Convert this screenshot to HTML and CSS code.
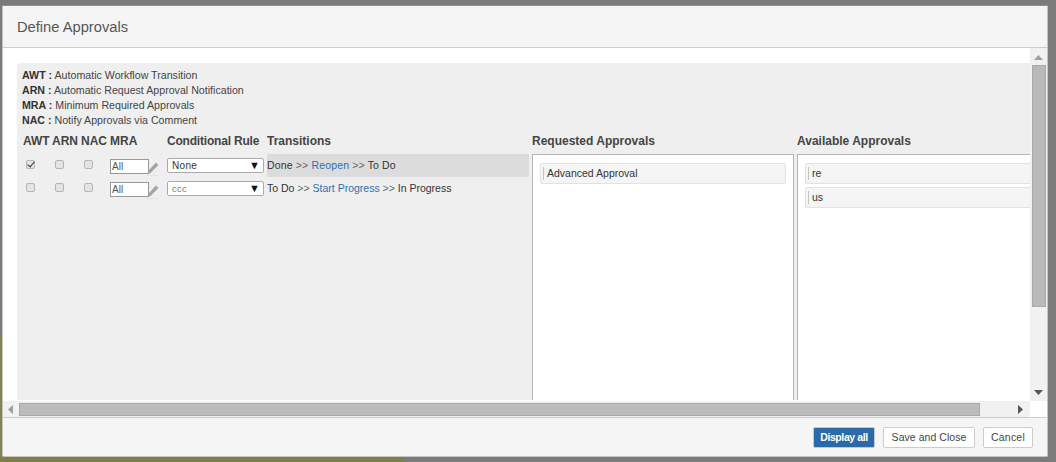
FILE: index.html
```html
<!DOCTYPE html>
<html lang="en">
<head>
<meta charset="utf-8">
<title>Define Approvals</title>
<link rel="stylesheet" href="styles.css">
</head>
<body>
<div class="bg-strip-left"></div>
<div class="bg-strip-bottom"></div>
<div class="dialog">
  <header class="dialog-header"><h2>Define Approvals</h2></header>
  <div class="dialog-body">
    <div class="scroll-row">
      <div class="viewport">
        <div class="panel">
          <div class="legend">
            <div><b>AWT :</b> Automatic Workflow Transition</div>
            <div><b>ARN :</b> Automatic Request Approval Notification</div>
            <div><b>MRA :</b> Minimum Required Approvals</div>
            <div><b>NAC :</b> Notify Approvals via Comment</div>
          </div>
          <div class="columns">
            <div class="rules">
              <div class="th">AWT</div><div class="th">ARN</div><div class="th">NAC</div><div class="th th-mra">MRA</div><div class="th th-rule">Conditional Rule</div><div class="th">Transitions</div>

              <div class="cell"><input class="check" type="checkbox" checked></div>
              <div class="cell"><input class="check" type="checkbox"></div>
              <div class="cell"><input class="check" type="checkbox"></div>
              <div class="cell mra"><input class="mra-input" type="text" value="All"><svg class="pencil" width="13" height="14" viewBox="0 0 13 14"><path d="M10 0.5 L12.5 3 L4.5 11 L1 12.5 L2.2 8.8 Z" fill="#a4a4a4"/><path d="M0 13.5 H12" stroke="#e4e4e4" stroke-width="1"/></svg></div>
              <div class="cell"><div class="select"><span>None</span><span class="caret">▼</span></div></div>
              <div class="cell transition selected first">Done <i>&gt;&gt;</i> <a href="#">Reopen</a> <i>&gt;&gt;</i> To Do</div>

              <div class="cell"><input class="check" type="checkbox"></div>
              <div class="cell"><input class="check" type="checkbox"></div>
              <div class="cell"><input class="check" type="checkbox"></div>
              <div class="cell mra"><input class="mra-input" type="text" value="All"><svg class="pencil" width="13" height="14" viewBox="0 0 13 14"><path d="M10 0.5 L12.5 3 L4.5 11 L1 12.5 L2.2 8.8 Z" fill="#a4a4a4"/><path d="M0 13.5 H12" stroke="#e4e4e4" stroke-width="1"/></svg></div>
              <div class="cell"><div class="select muted"><span>ccc</span><span class="caret">▼</span></div></div>
              <div class="cell transition">To Do <i>&gt;&gt;</i> <a href="#">Start Progress</a> <i>&gt;&gt;</i> In Progress</div>
            </div>
            <section class="approvals requested">
              <div class="th">Requested Approvals</div>
              <div class="box">
                <div class="item">Advanced Approval</div>
              </div>
            </section>
            <section class="approvals available">
              <div class="th">Available Approvals</div>
              <div class="box">
                <div class="item">re</div>
                <div class="item">us</div>
              </div>
            </section>
          </div>
        </div>
      </div>
      <div class="vscroll">
        <svg class="arrow" width="9" height="5" viewBox="0 0 9 5"><path d="M4.5 0 L9 5 H0 Z" fill="#a0a0a0"/></svg>
        <div class="vthumb"></div>
        <svg class="arrow arrow-down" width="9" height="5" viewBox="0 0 9 5"><path d="M0 0 H9 L4.5 5 Z" fill="#555"/></svg>
      </div>
    </div>
    <div class="hscroll-row">
      <div class="hscroll">
        <svg class="arrow-h" width="5" height="9" viewBox="0 0 5 9"><path d="M5 0 V9 L0 4.5 Z" fill="#a0a0a0"/></svg>
        <div class="hthumb"></div>
        <svg class="arrow-h" width="5" height="9" viewBox="0 0 5 9"><path d="M0 0 L5 4.5 L0 9 Z" fill="#555"/></svg>
      </div>
      <div class="corner"></div>
    </div>
  </div>
  <footer class="dialog-footer">
    <button class="btn primary" type="button">Display all</button>
    <button class="btn save" type="button">Save and Close</button>
    <button class="btn cancel" type="button">Cancel</button>
  </footer>
</div>
</body>
</html>
```
FILE: styles.css
```css
* { box-sizing: border-box; }
html, body { margin: 0; height: 100%; }
body {
  background: #7b7b7b;
  font-family: "Liberation Sans", Arial, sans-serif;
  color: #333;
  padding: 5px 8px 5px 2px;
  overflow: hidden;
}
.bg-strip-left {
  position: absolute; left: 0; top: 335px; width: 2px; height: 122px; background: #84844a;
}
.bg-strip-bottom {
  position: absolute; left: 0; top: 457px; width: 404px; height: 5px; background: #7f7f45;
}
.dialog {
  position: relative;
  width: 1046px; height: 452px;
  display: flex; flex-direction: column;
  background: #fff;
  border: 1px solid #c4c4c4;
  border-top-color: #8f8f8f;
  border-radius: 2px;
}
.dialog-header {
  height: 42px; flex: none;
  background: #f5f5f5;
  border-bottom: 1px solid #ccc;
  padding-left: 14px;
  display: flex; align-items: center;
}
.dialog-header h2 { margin: 0; font-size: 14.7px; font-weight: 400; color: #555; }
.dialog-body { flex: 1; min-height: 0; display: flex; flex-direction: column; }
.scroll-row { flex: 1; min-height: 0; display: flex; }
.viewport { flex: 1; min-width: 0; overflow: hidden; padding: 15px 0 0 14px; }
.panel {
  width: 1200px; height: 337px;
  overflow: hidden;
  background: #efefef;
  border-top-left-radius: 4px;
  padding: 5px 0 0 5px;
}
.legend { font-size: 10.65px; line-height: 15px; color: #444; margin-bottom: 5px; }
.legend b { color: #333; }
.columns { display: grid; grid-template-columns: 510px 265px 1fr; }
.rules {
  display: grid;
  grid-template-columns: 29px 29px 29px 58px 100px 262px;
  grid-template-rows: 21px 23px 23px;
  align-content: start;
}
.th { font-size: 12px; font-weight: 700; line-height: 16px; color: #444; padding-left: 1px; white-space: nowrap; }
.rules .th:nth-child(n+5) { padding-left: 0; }
.th-rule { letter-spacing: -.2px; }
.approvals .th { padding-left: 0; height: 21px; }
.cell { display: flex; align-items: center; font-size: 10.5px; color: #333; }
.check {
  appearance: none; -webkit-appearance: none;
  margin: -3px 0 0 4px;
  width: 9px; height: 9px;
  background: #e4e4e4;
  border: 1px solid #b5b5b5;
  border-radius: 2px;
  position: relative;
}
.check:checked::after {
  content: ""; position: absolute; left: 2px; top: -1px;
  width: 3px; height: 6px;
  border: solid #333; border-width: 0 1.5px 1.5px 0;
  transform: rotate(40deg);
}
.mra { padding-left: 1px; position: relative; }
.mra-input {
  width: 39px; height: 15px; margin-top: 2px;
  padding: 0 1px;
  font: 10px "Liberation Sans", Arial, sans-serif;
  color: #555;
  background: #fff;
  border: 1px solid #999;
  border-radius: 0;
}
.pencil { margin: 7px 0 0 -3px; }
.select {
  width: 97px; height: 15px;
  display: flex; justify-content: space-between; align-items: center;
  padding: 0 3px 0 4px;
  background: #fff;
  border: 1px solid #aaa;
  border-radius: 2px;
  font-size: 10px; letter-spacing: .3px; color: #333;
}
.select.muted { color: #777; font-size: 9.5px; }
.caret { font-size: 11px; line-height: 11px; color: #111; letter-spacing: 0; }
.transition { white-space: nowrap; display: block; line-height: 21px; padding-top: 1px; }
.transition.selected { background: #dcdcdc; }
.transition.first { letter-spacing: .15px; }
.transition i { font-style: normal; color: #666; }
.transition a { color: #2f6fb3; text-decoration: none; }
.box {
  height: 300px;
  background: #fff;
  border: 1px solid #b5b5b5;
  padding: 8px 7px;
}
.requested .box { width: 262px; }
.available .box { width: 340px; }
.item {
  position: relative;
  height: 21px; margin-bottom: 3px;
  background: #f5f5f5;
  border: 1px solid #e2e2e2;
  border-radius: 2px;
  padding-left: 6px;
  font-size: 10.5px; line-height: 19px; color: #333;
}
.item::before {
  content: ""; position: absolute; left: 2px; top: 3px;
  width: 1px; height: 13px; background: #c4c4c4;
}
.vscroll {
  width: 17px; flex: none;
  background: #f1f1f1;
  display: flex; flex-direction: column; align-items: center;
  padding: 7px 0 6px;
  position: relative;
}
.arrow { flex: none; }
.vthumb {
  width: 14px; height: 242px; margin-top: 5px;
  background: #b9b9b9; border: 1px solid #a8a8a8;
}
.arrow-down { margin-top: auto; }
.hscroll-row { height: 16px; flex: none; display: flex; }
.hscroll {
  flex: 1;
  background: #f1f1f1;
  display: flex; align-items: center;
  padding: 0 7px 0 5px;
}
.hthumb {
  width: 961px; height: 13px; margin-left: 6px;
  background: #bcbcbc; border: 1px solid #a8a8a8;
}
.hscroll .arrow-h:last-child { margin-left: auto; }
.corner { width: 17px; background: #fff; }
.dialog-footer {
  height: 39px; flex: none;
  background: #f5f5f5;
  border-top: 1px solid #ccc;
  display: flex; justify-content: flex-end; align-items: center;
  gap: 8px;
  padding: 0 14px 0 0;
}
.btn {
  height: 21px; padding: 0;
  font: 10.5px "Liberation Sans", Arial, sans-serif;
  letter-spacing: .2px;
  color: #444;
  background: #fff;
  border: 1px solid #ccc;
  border-radius: 2px;
}
.btn.cancel { width: 50px; }
.btn.save { width: 92px; letter-spacing: .05px; }
.btn.primary { width: 62px; background: #2a6aa8; border-color: #c0c8d0; color: #fff; font-weight: 700; letter-spacing: -.4px; }
```
